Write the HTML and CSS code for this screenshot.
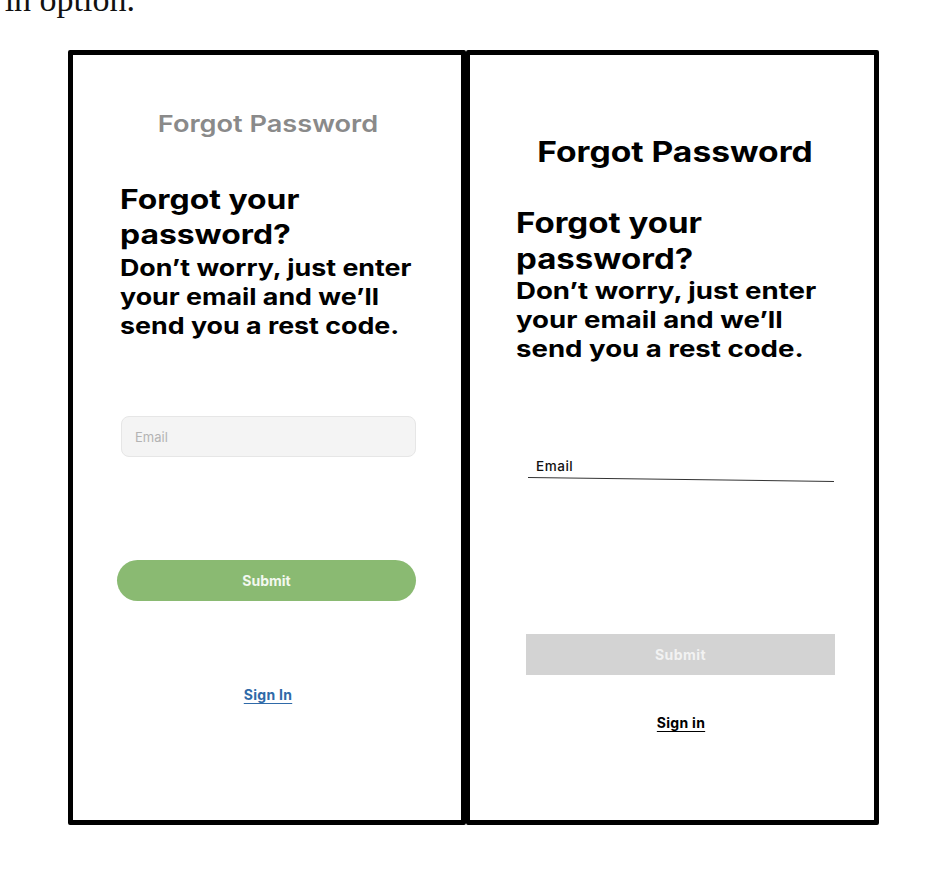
FILE: index.html
```html
<!DOCTYPE html>
<html>
<head>
<meta charset="utf-8">
<link rel="stylesheet" href="styles.css">
</head>
<body>
<div class="cut"><span>users to have a sign in option.</span></div>
<div class="frames">
  <section class="panel panel-a">
    <h1 class="head-a">Forgot Password</h1>
    <h2 class="title">Forgot your<br>password?</h2>
    <p class="sub">Don’t worry, just enter<br>your email and we’ll<br>send you a rest code.</p>
    <div class="field-a">Email</div>
    <button class="btn-a">Submit</button>
    <a class="link-a" href="#">Sign In</a>
  </section>
  <section class="panel panel-b">
    <h1 class="head-b">Forgot Password</h1>
    <h2 class="title title-b">Forgot your<br>password?</h2>
    <p class="sub sub-b">Don’t worry, just enter<br>your email and we’ll<br>send you a rest code.</p>
    <div class="field-b">
      <span class="label-b">Email</span>
      <div class="line-b"></div>
    </div>
    <button class="btn-b">Submit</button>
    <a class="link-b" href="#">Sign in</a>
  </section>
</div>
</body>
</html>
```
FILE: styles.css
```css
html, body { margin: 0; padding: 0; background: #fff; }
body { width: 930px; height: 894px; overflow: hidden; font-family: Inter, "Liberation Sans", sans-serif; }

.cut {
  width: 135px;
  height: 34px;
  margin-top: -17px;
  display: flex;
  justify-content: flex-end;
  font-family: "Liberation Serif", serif;
  font-size: 34px;
  line-height: 34px;
  white-space: nowrap;
  color: #111;
}
.cut span { flex: none; }

.frames {
  display: flex;
  margin-top: 33px;
  margin-left: 68px;
}

.panel {
  box-sizing: border-box;
  height: 775px;
  border: 5px solid #000;
  border-radius: 2px;
  display: flex;
  flex-direction: column;
}
.panel-a { width: 398px; padding: 0 45px 0 47px; }
.panel-b { width: 413px; border-left-width: 4px; padding: 0 40px 0 46px; }

.head-a {
  margin: 53px 0 0;
  text-align: center;
  font-size: 23px;
  font-weight: 600;
  color: #8a8a8a;
  line-height: 32px;
  transform: scaleX(1.18);
}
.head-b {
  margin: 79px 0 0;
  text-align: center;
  font-size: 28px;
  font-weight: 700;
  color: #000;
  line-height: 36px;
  transform: scaleX(1.2);
}

.title {
  margin: 42px 0 0;
  font-size: 27px;
  font-weight: 700;
  line-height: 35px;
  color: #000;
  transform: scaleX(1.18);
  transform-origin: left center;
}
.title-b { margin-top: 35px; font-size: 28px; line-height: 36px; }

.sub {
  margin: 2px 0 0;
  font-size: 23px;
  font-weight: 700;
  line-height: 29px;
  color: #000;
  transform: scaleX(1.165);
  transform-origin: left center;
}
.sub-b { margin-top: 0; transform: scaleX(1.2); }

.field-a {
  box-sizing: border-box;
  margin: 75px 0 0 1px;
  height: 41px;
  background: #f4f4f4;
  border: 1px solid #e6e6e6;
  border-radius: 8px;
  padding: 0 13px;
  display: flex;
  align-items: center;
  font-size: 13px;
  color: #b3b3b3;
}

.btn-a {
  margin: 103px 0 0 -3px;
  height: 41px;
  border: none;
  border-radius: 21px;
  background: #8aba72;
  color: #f3f8ef;
  font-family: inherit;
  font-size: 14px;
  font-weight: 700;
}

.link-a {
  margin: 85px auto 0;
  font-size: 14px;
  font-weight: 700;
  letter-spacing: 0.02em;
  color: #2f6aa8;
  text-decoration: underline;
  text-underline-offset: 3px;
}

.field-b {
  margin: 94px 0 0 12px;
}
.label-b {
  display: block;
  padding-left: 8px;
  font-size: 13.5px;
  font-weight: 500;
  letter-spacing: 0.04em;
  color: #111;
  line-height: 16px;
}
.line-b {
  height: 1px;
  margin-top: 3px;
  background: #333;
  transform: rotate(0.75deg);
  transform-origin: left center;
}

.btn-b {
  margin: 156px -1px 0 10px;
  height: 41px;
  border: none;
  background: #d3d3d3;
  color: #f2f2f2;
  font-family: inherit;
  font-size: 14px;
  font-weight: 700;
  letter-spacing: 0.03em;
}

.link-b {
  align-self: center;
  margin: 39px 0 0 12px;
  font-size: 14px;
  font-weight: 700;
  letter-spacing: 0.02em;
  color: #000;
  text-decoration: underline;
  text-underline-offset: 3px;
}
```
